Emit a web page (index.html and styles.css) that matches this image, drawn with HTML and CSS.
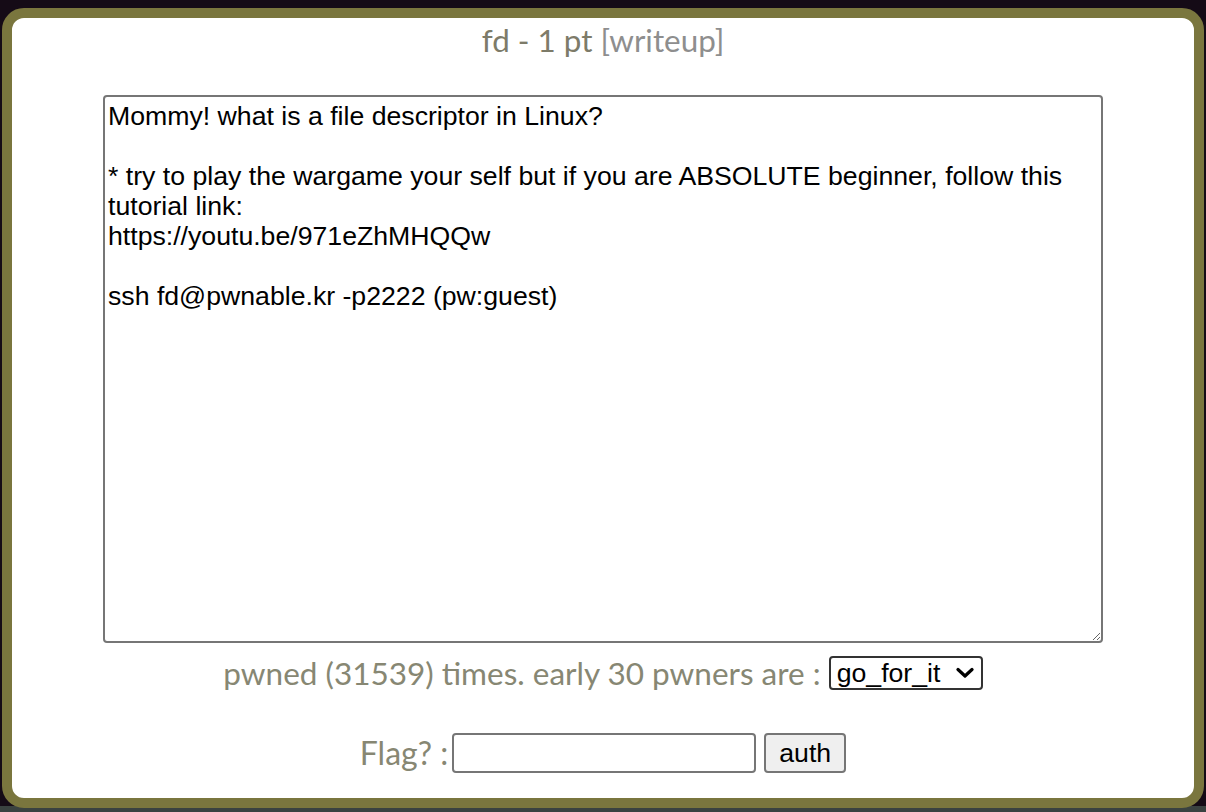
FILE: index.html
```html
<!DOCTYPE html>
<html>
<head>
<meta charset="utf-8">
<link rel="stylesheet" href="styles.css">
</head>
<body>
<div class="modal">
  <div class="title"><span class="chal">fd - 1 pt</span> <a class="writeup">[writeup]</a></div>
  <textarea class="desc" readonly>Mommy! what is a file descriptor in Linux?

* try to play the wargame your self but if you are ABSOLUTE beginner, follow this tutorial link:
https://youtu.be/971eZhMHQQw

ssh fd@pwnable.kr -p2222 (pw:guest)</textarea>
  <div class="pwned">
    <span class="label">pwned (31539) times. early 30 pwners are :</span>
    <span class="select-wrap">
      <select class="pwners"><option>go_for_it</option></select>
      <svg class="chev" width="18" height="12" viewBox="0 0 18 12"><path d="M2 2.5 L9 9 L16 2.5" fill="none" stroke="#000" stroke-width="3.2" stroke-linecap="round" stroke-linejoin="round"/></svg>
    </span>
  </div>
  <div class="flag">
    <span class="label flag-label">Flag? :</span>
    <input class="flag-input" type="text">
    <button class="auth">auth</button>
  </div>
</div>
</body>
</html>
```

FILE: styles.css
```css
html, body {
  margin: 0;
  padding: 0;
}
body {
  width: 1206px;
  height: 812px;
  overflow: hidden;
  background: linear-gradient(to bottom, #150b16 0px, #150b16 806px, #3a4240 806px, #3a4240 812px);
  padding-top: 8px;
  padding-left: 2px;
  box-sizing: border-box;
}
.modal {
  width: 1202px;
  height: 800px;
  box-sizing: border-box;
  border: 10px solid #7a763e;
  border-radius: 22px;
  background: #fff;
  display: flex;
  flex-direction: column;
  align-items: center;
  font-family: Lato, "Open Sans", sans-serif;
}
.title {
  height: 44px;
  line-height: 44px;
  font-size: 31.4px;
  color: #7d7b69;
}
.writeup {
  color: #8e8e8e;
}
.desc {
  margin-top: 33px;
  width: 1000px;
  height: 548px;
  box-sizing: border-box;
  border: 2px solid #767676;
  border-radius: 4px;
  padding: 4px 4px 4px 3px;
  font-family: "Liberation Sans", Arial, sans-serif;
  font-size: 26.67px;
  line-height: 30px;
  color: #000;
  resize: both;
  outline: none;
}
.pwned {
  margin-top: 12px;
  height: 36px;
  display: flex;
  align-items: center;
  gap: 8px;
}
.label {
  font-size: 31.5px;
  line-height: 36px;
  color: #878773;
}
.flag-label {
  font-size: 32px;
}
.select-wrap {
  position: relative;
  display: inline-block;
}
.pwners {
  appearance: none;
  -webkit-appearance: none;
  width: 154px;
  height: 34px;
  box-sizing: border-box;
  border: 2px solid #333;
  border-radius: 4px;
  background: #fff;
  font-family: "Liberation Sans", Arial, sans-serif;
  font-size: 26.67px;
  color: #000;
  padding: 0 0 0 6px;
  display: block;
}
.chev {
  position: absolute;
  right: 9px;
  top: 11px;
  pointer-events: none;
}
.flag {
  margin-top: 42px;
  height: 40px;
  display: flex;
  align-items: center;
  gap: 4px;
}
.flag-input {
  width: 304px;
  height: 40px;
  box-sizing: border-box;
  border: 2px solid #767676;
  border-radius: 4px;
  margin: 0;
  font-size: 26.67px;
}
.auth {
  margin-left: 4px;
  width: 82px;
  height: 40px;
  box-sizing: border-box;
  border: 2px solid #767676;
  border-radius: 4px;
  background: #efefef;
  font-family: "Liberation Sans", Arial, sans-serif;
  font-size: 26.67px;
  color: #000;
  padding: 0;
}
```
